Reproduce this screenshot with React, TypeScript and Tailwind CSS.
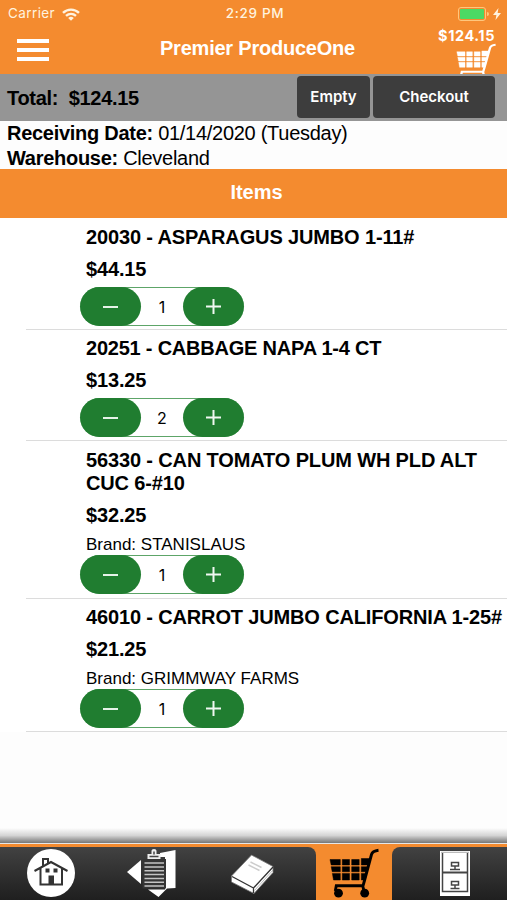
type Item = {
  code: string;
  name: string;
  price: string;
  qty: number;
  brand?: string;
  rowClass: string;
  nameClass: string;
};

const items: Item[] = [
  { code: '20030', name: 'ASPARAGUS JUMBO 1-11#', price: '$44.15', qty: 1, rowClass: 'h-28 pt-2', nameClass: 'tracking-[-0.14px]' },
  { code: '20251', name: 'CABBAGE NAPA 1-4 CT', price: '$13.25', qty: 2, rowClass: 'h-[111px] pt-[7px]', nameClass: 'tracking-[-0.22px]' },
  { code: '56330', name: 'CAN TOMATO PLUM WH PLD ALT CUC 6-#10', price: '$32.25', qty: 1, brand: 'STANISLAUS', rowClass: 'h-[158px] pt-2', nameClass: 'tracking-[-0.14px]' },
  { code: '46010', name: 'CARROT JUMBO CALIFORNIA 1-25#', price: '$21.25', qty: 1, brand: 'GRIMMWAY FARMS', rowClass: 'h-[133px] pt-[7px]', nameClass: 'tracking-[-0.15px] whitespace-nowrap' },
];

function CartIcon({ className }: { className: string }) {
  return (
    <svg viewBox="0 0 50 50" preserveAspectRatio="none" className={className} fill="none" stroke="currentColor">
      <path
        d="M1 11.500h10.300V17H2.200zM13.300 11.500h7.200V17h-7.200zM22.700 11.500h7.500V17h-7.500zM32.300 10.500h9L39.500 17h-7.200zM2.200 18.700h9.100v5H3.200zM13.300 18.700h7.200v5h-7.200zM22.700 18.700h7.500v5h-7.500zM32.300 18.700h7l-1.300 5h-5.700zM3.400 25.400h7.900V32H4.500zM13.300 25.400h7.200V32h-7.200zM22.700 25.400h7.500V32h-7.500zM32.300 25.400h5.500L36 32h-3.700z"
        fill="currentColor"
        strokeWidth="0.500"
      />
      <path d="M49.500 2.300Q43.500 3 42.500 6.500L35.500 32.500 34 37.800H7.300L6.300 43M33.500 37l1.500 6" strokeWidth="2.900" />
      <circle cx="9.500" cy="45.200" r="4.400" fill="currentColor" stroke="none" />
      <circle cx="35.700" cy="45.200" r="4.400" fill="currentColor" stroke="none" />
    </svg>
  );
}

function StatusBar() {
  return (
    <div className="flex h-7 items-center justify-between pr-1.5 pl-2 font-['Inter'] text-[13.5px] leading-none text-[#fff3df]">
      <div className="flex w-40 items-center gap-[7px]">
        <span className="tracking-[0.4px]">Carrier</span>
        <svg viewBox="0 0 18 13" className="h-[13px] w-[18px]" fill="none" stroke="currentColor" strokeWidth="2.400">
          <path d="M1 4.800C5.500.5 12.500.5 17 4.800M4 7.900C7 5.200 11 5.200 14 7.900" />
          <path d="M9 12.700L6.200 9.900Q9 7.700 11.800 9.900z" fill="currentColor" stroke="none" />
        </svg>
      </div>
      <span className="pl-px font-medium tracking-[0.7px]">2:29 PM</span>
      <div className="flex w-40 items-center justify-end gap-1">
        <div className="flex items-center gap-px">
          <div className="h-3.5 w-7 rounded-[3px] border border-[#ffc77d] p-px">
            <div className="h-full rounded-[1px] bg-[#4cd964]" />
          </div>
          <div className="h-1 w-0.5 rounded-r bg-[#ffc77d]" />
        </div>
        <svg viewBox="0 0 8 12" className="h-3 w-2" fill="currentColor">
          <path d="M5.500 0L0 7h3.400L2.500 12 8 5H4.600z" />
        </svg>
      </div>
    </div>
  );
}

function Header() {
  return (
    <header className="h-[74px] shrink-0 overflow-hidden bg-[#f48b2f] text-white">
      <StatusBar />
      <div className="flex items-start justify-between pr-3 pl-[17px]">
        <div className="mt-[11px] flex w-[83px] flex-col gap-[5px]">
          <div className="h-1 w-8 bg-white" />
          <div className="h-1 w-8 bg-white" />
          <div className="h-1 w-8 bg-white" />
        </div>
        <h1 className="mt-2 text-[20px] leading-6 font-bold tracking-[-0.22px] whitespace-nowrap">Premier ProduceOne</h1>
        <div className="flex w-20 flex-col items-end">
          <span className="font-['Inter'] text-[14.5px] leading-4 font-bold tracking-[0.55px]">$124.15</span>
          <CartIcon className="-mt-px -mr-px h-[38px] w-10" />
        </div>
      </div>
    </header>
  );
}

function Stepper({ qty }: { qty: number }) {
  return (
    <div className="flex h-[39px] w-[164px] items-center justify-between rounded-full border-y border-[#5da568] bg-white">
      <button className="flex h-[39px] w-[61px] items-center justify-center rounded-full bg-[#207d30]">
        <span className="h-0.5 w-[15px] bg-[#e6f2e8]" />
      </button>
      <span className="font-['Inter'] text-base">{qty}</span>
      <button className="flex h-[39px] w-[61px] items-center justify-center rounded-full bg-[#207d30]">
        <svg viewBox="0 0 15 15" className="size-[15px]" stroke="#f0f8f1" strokeWidth="2">
          <path d="M0 7.500h15M7.500 0v15" />
        </svg>
      </button>
    </div>
  );
}

function ItemRow({ item }: { item: Item }) {
  return (
    <li className="bg-white pl-[26px]">
      <div className={`flex flex-col border-b border-[#dcdcdc] pl-[60px] ${item.rowClass}`}>
        <h3 className={`text-[20px] leading-[23px] font-bold ${item.nameClass}`}>
          {item.code} - {item.name}
        </h3>
        <p className="mt-[9px] text-[20px] leading-[23px] font-bold tracking-[-0.15px]">{item.price}</p>
        {item.brand && <p className="mt-2 -mb-1.5 text-[17px] leading-5">Brand: {item.brand}</p>}
        <div className="mt-1.5 -ml-1.5">
          <Stepper qty={item.qty} />
        </div>
      </div>
    </li>
  );
}

function HomeIcon() {
  return (
    <svg viewBox="0 0 48 48" className="size-12">
      <circle cx="24" cy="24" r="24" fill="white" />
      <g fill="none" stroke="#333" strokeWidth="2">
        <path d="M7.500 22L24 13l16.500 9M13.500 19.500V35.500h21.500v-16M16 17.500V10h5v4.500" />
        <path d="M22.500 35v-7.500h3.500V35z" fill="#333" />
        <path d="M18.500 21.500h4M26.500 21.500h4" strokeWidth="4" />
      </g>
    </svg>
  );
}

function OrdersIcon() {
  return (
    <svg viewBox="0 0 50 50" className="h-[50px] w-[50px]">
      <path d="M0 25L14 13v24z" fill="white" />
      <path d="M33 6l15.500-3v38l-8.500.500L31.500 50 21 42.500h17V10h-5z" fill="white" />
      <path d="M15.500 12H39v29.500H15.500z" fill="#353535" />
      <path d="M17.500 16h19.500M17.500 20h19.500M17.500 23.800h19.500M17.500 27.600h19.500M17.500 31.400h19.500M17.500 35.200h19.500M17.500 39h19.500" stroke="#c4c4c4" strokeWidth="1.500" />
      <path d="M20.500 12V7h4V3.800q0-1.800 2.500-1.800t2.500 1.800V7h4v5z" fill="#eee" />
      <path d="M22.500 9.500h9M27 4.500v3" stroke="#444" strokeWidth="1.500" />
    </svg>
  );
}

function BookIcon() {
  return (
    <svg viewBox="0 0 46 44" className="h-11 w-[46px]">
      <path d="M1.500 23L21.500 2 43 13.500v6L24 40.500 1.500 29z" fill="white" stroke="#777" strokeWidth="0.800" />
      <path d="M2 23.500l21.500 11.500L43 14M23.500 35v5" fill="none" stroke="#333" strokeWidth="1.300" />
      <path d="M43 17L24.500 37.500" stroke="#aaa" strokeWidth="0.800" />
      <path d="M20.500 9l11 5.500M18.500 12l11 5.500" stroke="#ccc" strokeWidth="1.500" />
    </svg>
  );
}

function CabinetIcon() {
  return (
    <svg viewBox="0 0 30 45" className="h-[45px] w-[30px]" fill="none" stroke="#444">
      <path d="M0 0h30v45H0z" fill="white" stroke="none" />
      <path d="M2.500 2v38.500h25V2" strokeWidth="1.500" />
      <path d="M2.500 21.500h25" strokeWidth="2" />
      <path d="M1 1.300h28" stroke="#aaa" />
      <path d="M11.500 11.500h7V15h-7zM10 18.500h10M15 15v3M11.500 30.500h7V34h-7zM10.500 37.500h9M15 34v3" strokeWidth="1.500" />
    </svg>
  );
}

function TabBar() {
  return (
    <footer className="h-[72px] shrink-0">
      <div className="h-[15px] bg-linear-to-b from-[#fdfdfd] via-[#d4d4d4] to-[#777]" />
      <div className="h-px bg-[#e6e6e6]" />
      <div className="h-[56px] bg-[#f48b2f] pt-[3px]">
        <nav className="flex h-[53px]">
          <div className="flex w-[316px] rounded-tr-[8px] bg-linear-to-b from-[#424242] to-[#1f1f1f]">
            <button className="mt-0.5 ml-[27px] h-12"><HomeIcon /></button>
            <button className="ml-[52px] h-[50px]"><OrdersIcon /></button>
            <button className="mt-1.5 ml-[53px] h-11"><BookIcon /></button>
          </div>
          <button className="flex h-[50px] w-[76px] justify-center text-black"><CartIcon className="mt-px size-[50px]" /></button>
          <div className="flex flex-1 rounded-tl-[8px] bg-linear-to-b from-[#424242] to-[#1f1f1f]">
            <button className="mt-1 ml-12 h-[45px]"><CabinetIcon /></button>
          </div>
        </nav>
      </div>
    </footer>
  );
}

export default function App() {
  return (
    <div className="flex h-[900px] w-[507px] flex-col overflow-hidden bg-[#fdfdfd] font-['Liberation_Sans',Arial,sans-serif] text-black">
      <Header />
      <div className="flex h-[47px] shrink-0 items-start bg-[#959595] pr-3 pl-[7px]">
        <p className="mt-3 flex-1 text-[20px] leading-6 font-bold tracking-[-0.3px] whitespace-pre">Total:  $124.15</p>
        <div className="mt-[2px] flex gap-[3px] font-['Inter'] text-[15px] font-semibold text-white">
          <button className="h-[42px] w-[73px] rounded bg-[#3d3d3d]">Empty</button>
          <button className="h-[42px] w-[122px] rounded bg-[#3d3d3d]">Checkout</button>
        </div>
      </div>
      <div className="h-12 shrink-0 pl-[7px] text-[20px] leading-[25px] tracking-[-0.28px]">
        <p><b>Receiving Date:</b> 01/14/2020 (Tuesday)</p>
        <p><b>Warehouse:</b> Cleveland</p>
      </div>
      <h2 className="h-[49px] shrink-0 bg-[#f48b2f] pt-[11px] pl-1.5 text-center text-[20px] leading-6 font-bold text-white">Items</h2>
      <ul className="flex-1">
        {items.map((item) => (
          <ItemRow key={item.code} item={item} />
        ))}
      </ul>
      <TabBar />
    </div>
  );
}
